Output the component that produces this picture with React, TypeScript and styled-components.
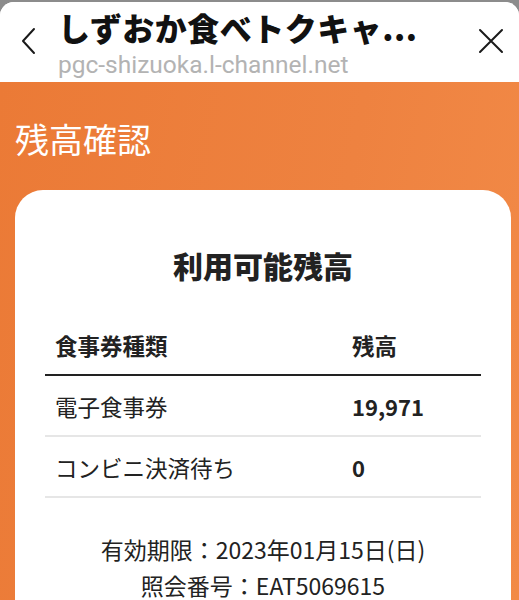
import React from "react";
import styled, { createGlobalStyle } from "styled-components";

const GlobalStyle = createGlobalStyle`
  html, body {
    margin: 0;
    padding: 0;
    background: #8c8c8c;
    overflow: hidden;
  }
  body {
    font-family: Roboto, "Noto Sans CJK JP", sans-serif;
  }
`;

const Screen = styled.div`
  width: 519px;
  height: 600px;
  padding-top: 2px;
  box-sizing: border-box;
  overflow: hidden;
`;

const Sheet = styled.div`
  height: 100%;
  border-radius: 14px 14px 0 0;
  overflow: hidden;
  background: #fff;
  display: flex;
  flex-direction: column;
`;

const Header = styled.header`
  height: 80px;
  flex-shrink: 0;
  display: grid;
  grid-template-columns: 58px 1fr 56px;
  align-items: stretch;
  background: #fff;
`;

const IconButton = styled.div`
  display: flex;
  align-items: center;
  justify-content: center;
  padding-bottom: 2px;
  color: #1a1a1a;
`;

const TitleBlock = styled.div`
  display: flex;
  flex-direction: column;
  min-width: 0;
  padding-top: 5px;
`;

const PageTitle = styled.div`
  font-family: "Noto Sans CJK JP", sans-serif;
  font-weight: 900;
  font-size: 32px;
  line-height: 40px;
  color: #111;
  white-space: nowrap;
  letter-spacing: 0.5px;
`;

const Url = styled.div`
  margin-top: 5px;
  font-family: Roboto, sans-serif;
  font-size: 24.5px;
  line-height: 26px;
  color: #b3b3b3;
  white-space: nowrap;
`;

const Body = styled.main`
  flex: 1;
  background: linear-gradient(100deg, #eb7a36 0%, #ee8240 60%, #f28a47 100%);
  padding: 36px 8px 0 15px;
  display: flex;
  flex-direction: column;
`;

const SectionTitle = styled.h1`
  margin: 0 0 30px 0;
  font-family: "Noto Sans CJK JP", sans-serif;
  font-weight: 400;
  font-size: 34px;
  line-height: 42px;
  color: #fff;
`;

const Card = styled.section`
  flex: 1;
  background: #fff;
  border-radius: 28px 28px 0 0;
  padding: 55px 30px 0 30px;
`;

const CardTitle = styled.h2`
  margin: 0 0 30px;
  text-align: center;
  font-family: "Noto Sans CJK JP", sans-serif;
  font-weight: 900;
  font-size: 30px;
  line-height: 40px;
  color: #222;
`;

const Table = styled.table`
  width: 100%;
  table-layout: fixed;
  border-collapse: collapse;
  font-family: "Noto Sans CJK JP", sans-serif;
  color: #222;
`;

const Th = styled.th<{ $w?: string }>`
  width: ${({ $w }) => $w || "auto"};
  text-align: left;
  font-weight: 700;
  font-size: 22.5px;
  height: 59px;
  padding: 0 0 0 10px;
  border-bottom: 2px solid #222;
`;

const Td = styled.td<{ $bold?: boolean }>`
  text-align: left;
  font-weight: ${({ $bold }) => ($bold ? 700 : 400)};
  font-size: ${({ $bold }) => ($bold ? "22px" : "22.5px")};
  height: 59px;
  padding: 0 0 0 10px;
  border-bottom: 2px solid #e6e6e6;
`;

const Info = styled.div`
  margin-top: 33px;
  text-align: center;
  font-family: "Noto Sans CJK JP", sans-serif;
  font-size: 23px;
  line-height: 36px;
  color: #222;
`;

const ChevronLeft = () => (
  <svg width="18" height="28" viewBox="0 0 18 28" fill="none">
    <path d="M14 2 L3 14 L14 26" stroke="#1a1a1a" strokeWidth="2" strokeLinecap="round" strokeLinejoin="round" />
  </svg>
);

const CloseIcon = () => (
  <svg width="26" height="26" viewBox="0 0 26 26" fill="none">
    <path d="M2 2 L24 24 M24 2 L2 24" stroke="#1a1a1a" strokeWidth="2" strokeLinecap="round" />
  </svg>
);

const rows = [
  { name: "電子食事券", balance: "19,971" },
  { name: "コンビニ決済待ち", balance: "0" },
];

export default function App() {
  return (
    <Screen>
      <GlobalStyle />
      <Sheet>
        <Header>
          <IconButton>
            <ChevronLeft />
          </IconButton>
          <TitleBlock>
            <PageTitle>しずおか食べトクキャ...</PageTitle>
            <Url>pgc-shizuoka.l-channel.net</Url>
          </TitleBlock>
          <IconButton>
            <CloseIcon />
          </IconButton>
        </Header>
        <Body>
          <SectionTitle>残高確認</SectionTitle>
          <Card>
            <CardTitle>利用可能残高</CardTitle>
            <Table>
              <thead>
                <tr>
                  <Th $w="287px">食事券種類</Th>
                  <Th>残高</Th>
                </tr>
              </thead>
              <tbody>
                {rows.map((r) => (
                  <tr key={r.name}>
                    <Td>{r.name}</Td>
                    <Td $bold>{r.balance}</Td>
                  </tr>
                ))}
              </tbody>
            </Table>
            <Info>
              <div>有効期限：2023年01月15日(日)</div>
              <div>照会番号：EAT5069615</div>
            </Info>
          </Card>
        </Body>
      </Sheet>
    </Screen>
  );
}
